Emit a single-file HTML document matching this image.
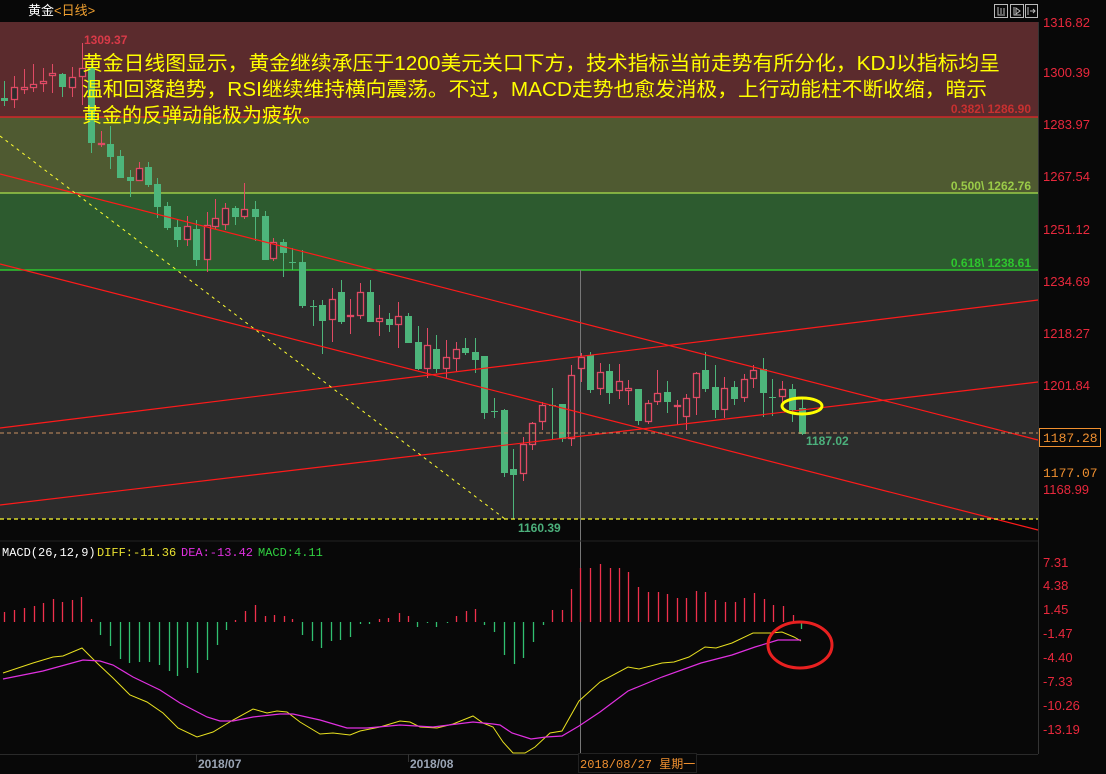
<!DOCTYPE html>
<html><head><meta charset="utf-8"><style>
html,body{margin:0;padding:0;background:#080808;width:1106px;height:774px;overflow:hidden}
svg{display:block}
text{font-family:"Liberation Sans","Noto Sans CJK SC",sans-serif}
.ax{fill:#e8283c;font-size:13px}
.mono{font-family:"Liberation Mono","Noto Sans CJK SC",monospace;font-size:12px}
</style></head><body>
<svg id="s" width="1106" height="774" viewBox="0 0 1106 774" xmlns="http://www.w3.org/2000/svg">
<rect width="1106" height="774" fill="#080808"/>
<rect x="0" y="0" width="1106" height="21" fill="#080808"/>
<text x="28" y="15" fill="#ffffff" font-size="13">黄金</text>
<text x="54" y="15" fill="#f0a030" font-size="13">&lt;日线&gt;</text>
<g fill="none" stroke="#bbb" stroke-width="1">
<rect x="994.5" y="4.5" width="13" height="13"/><rect x="1010.5" y="4.5" width="13" height="13"/><rect x="1025.5" y="4.5" width="12" height="13"/>
<path d="M998 7v8h7M1001 8v6M1004 8v6M1014 7v8h7M1016 8l4 3-4 3zM1028 7v8M1030 11h5M1033 9l2 2-2 2"/>
</g>
<rect x="0" y="22" width="1038" height="497" fill="#2c2c2c"/>
<rect x="0" y="22" width="1038" height="95" fill="#5b2b2d"/>
<rect x="0" y="117" width="1038" height="76" fill="#4f5a31"/>
<rect x="0" y="193" width="1038" height="77" fill="#2d5b2f"/>
<line x1="0" y1="117" x2="1038" y2="117" stroke="#d02828" stroke-width="1.5"/>
<line x1="0" y1="193" x2="1038" y2="193" stroke="#9acb48" stroke-width="1.5"/>
<line x1="0" y1="270" x2="1038" y2="270" stroke="#2ec52e" stroke-width="1.5"/>
<text x="1031" y="113" fill="#c83030" font-size="12" text-anchor="end" font-weight="bold">0.382\ 1286.90</text>
<text x="1031" y="190" fill="#9acb48" font-size="12" text-anchor="end" font-weight="bold">0.500\ 1262.76</text>
<text x="1031" y="267" fill="#2ec52e" font-size="12" text-anchor="end" font-weight="bold">0.618\ 1238.61</text>
<line x1="580.5" y1="270" x2="580.5" y2="758" stroke="#777" stroke-width="1"/>
<g id="candles"></g>
<g stroke="#ff1a1a" stroke-width="1.2" fill="none">
<line x1="0" y1="174" x2="1038" y2="440"/>
<line x1="0" y1="264" x2="1038" y2="530"/>
<line x1="0" y1="428" x2="1038" y2="300"/>
<line x1="0" y1="505" x2="1038" y2="382"/>
</g>
<line x1="0" y1="136" x2="505" y2="519" stroke="#ffff30" stroke-width="1" stroke-dasharray="3,4"/>
<line x1="0" y1="519" x2="1038" y2="519" stroke="#ffff30" stroke-width="1.2" stroke-dasharray="4,3"/>
<line x1="0" y1="433" x2="1038" y2="433" stroke="#c89060" stroke-width="1" stroke-dasharray="4,3"/>
<ellipse cx="802" cy="406" rx="20" ry="8" fill="none" stroke="#ffff00" stroke-width="3"/>
<text x="84" y="44" fill="#d83a48" font-size="12" font-weight="bold">1309.37</text>
<text x="806" y="445" fill="#4cb07c" font-size="12" font-weight="bold">1187.02</text>
<text x="518" y="532" fill="#4cb07c" font-size="12" font-weight="bold">1160.39</text>
<g fill="#ffff00" font-size="20">
<text x="82" y="70" textLength="918" lengthAdjust="spacingAndGlyphs">黄金日线图显示，黄金继续承压于1200美元关口下方，技术指标当前走势有所分化，KDJ以指标均呈</text>
<text x="82" y="96" textLength="905" lengthAdjust="spacingAndGlyphs">温和回落趋势，RSI继续维持横向震荡。不过，MACD走势也愈发消极，上行动能柱不断收缩，暗示</text>
<text x="82" y="122" textLength="240" lengthAdjust="spacingAndGlyphs">黄金的反弹动能极为疲软。</text>
</g>
<rect x="1038" y="22" width="68" height="752" fill="#080808"/>
<line x1="1038.5" y1="22" x2="1038.5" y2="754" stroke="#333"/>
<g class="ax">
<text x="1043" y="27">1316.82</text><text x="1043" y="77">1300.39</text><text x="1043" y="129">1283.97</text>
<text x="1043" y="181">1267.54</text><text x="1043" y="234">1251.12</text><text x="1043" y="286">1234.69</text>
<text x="1043" y="338">1218.27</text><text x="1043" y="390">1201.84</text><text x="1043" y="494">1168.99</text>
</g>
<rect x="1039.5" y="428.5" width="61" height="18" fill="#080808" stroke="#f09030"/>
<text x="1043" y="442" fill="#f09030" class="mono" style="font-size:13px">1187.28</text>
<text x="1043" y="477" fill="#f09030" class="mono" style="font-size:13px">1177.07</text>
<line x1="0" y1="541" x2="1038" y2="541" stroke="#222"/>
<text x="2" y="556" fill="#fff" class="mono">MACD(26,12,9)</text>
<text x="97" y="556" fill="#e8e030" class="mono">DIFF:-11.36</text>
<text x="181" y="556" fill="#e030e0" class="mono">DEA:-13.42</text>
<text x="258" y="556" fill="#30d040" class="mono">MACD:4.11</text>
<g class="ax">
<text x="1043" y="567">7.31</text><text x="1043" y="590">4.38</text><text x="1043" y="614">1.45</text>
<text x="1043" y="638">-1.47</text><text x="1043" y="662">-4.40</text><text x="1043" y="686">-7.33</text>
<text x="1043" y="710">-10.26</text><text x="1043" y="734">-13.19</text>
</g>
<g id="hist"></g>
<polyline fill="none" stroke="#e8e020" stroke-width="1" points="3,673 33,663 53,657 63,656 82,648 97,663 113,678 130,695 147,702 163,713 178,728 197,737 213,732 233,720 253,709 267,713 277,711 287,712 300,722 320,734 333,733 350,735 360,731 380,727 400,721 410,722 420,727 437,728 453,724 473,716 483,723 493,727 503,742 513,753 525,753 535,747 550,733 562,731 579,701 600,682 628,667 639,669 662,663 674,662 689,657 705,647 716,648 732,643 753,633 771,633 782,632 794,637 801,641"/>
<polyline fill="none" stroke="#e030e0" stroke-width="1.2" points="3,679 43,671 83,660 100,661 113,665 133,677 160,690 180,703 207,717 220,721 233,721 253,717 280,714 293,714 320,720 347,728 367,728 400,725 433,727 473,722 493,724 500,725 512,733 531,739 546,737 562,736 579,726 600,712 628,691 662,677 701,663 732,655 755,647 778,640 801,640"/>
<ellipse cx="800" cy="645" rx="32" ry="23" fill="none" stroke="#e82020" stroke-width="3"/>
<line x1="0" y1="754.5" x2="1038" y2="754.5" stroke="#2a2a2a"/>
<line x1="196.5" y1="754" x2="196.5" y2="762" stroke="#333"/>
<line x1="408.5" y1="754" x2="408.5" y2="762" stroke="#333"/>
<text x="198" y="768" fill="#9aa4b4" font-size="12" font-weight="bold">2018/07</text>
<text x="410" y="768" fill="#9aa4b4" font-size="12" font-weight="bold">2018/08</text>
<rect x="578.5" y="753.5" width="118" height="19" fill="#080808" stroke="#222"/>
<text x="580" y="768" fill="#f09030" class="mono" style="font-size:12px">2018/08/27 星期一</text>
</svg>
<script>
var C=[[4,98,101,81,106,'g'],[14,87,100,76,108,'r'],[24,87,90,69,94,'r'],[33,84,88,64,92,'r'],[43,81,84,68,92,'r'],[52,73,76,64,93,'r'],[62,74,87,73,97,'g'],[72,77,88,67,97,'r'],[82,68,77,43,105,'r'],
[91,68,143,62,153,'g'],[101,143,145,131,147,'r'],[110,144,157,126,169,'g'],[120,156,178,150,178,'g'],[130,177,181,170,197,'g'],[139,168,181,162,181,'r'],[148,167,185,162,187,'g'],[157,184,207,178,218,'g'],[167,206,228,202,230,'g'],[177,227,240,220,247,'g'],[187,226,240,216,246,'r'],[196,229,260,220,266,'g'],[207,225,260,212,272,'r'],[215,218,227,199,229,'r'],[225,208,225,203,230,'r'],[235,208,217,206,225,'g'],[244,209,217,183,219,'r'],[255,209,217,201,241,'g'],[265,216,260,211,260,'g'],[273,242,259,238,261,'r'],[283,242,253,239,277,'g'],[292,262,263,248,270,'g'],[302,262,306,250,308,'g'],[313,306,307,300,326,'g'],[322,305,321,300,354,'g'],[332,299,320,288,342,'r'],[341,292,322,280,324,'g'],[350,315,316,299,334,'r'],[360,292,316,283,319,'r'],[370,292,322,280,322,'g'],[379,318,322,305,336,'r'],[389,319,325,313,332,'g'],[398,316,325,302,348,'r'],[408,316,343,313,343,'g'],[418,342,369,326,370,'g'],[427,345,369,328,378,'r'],[436,349,369,335,373,'g'],
[446,357,369,340,378,'r'],[456,349,359,342,372,'r'],[465,348,353,338,355,'g'],[475,352,360,338,373,'g'],[484,356,413,356,419,'g'],[494,411,412,398,418,'g'],[504,410,473,409,477,'g'],[513,469,475,449,519,'g'],[523,444,474,437,481,'r'],[532,423,445,422,450,'r'],[542,405,422,402,430,'r'],[552,405,406,388,440,'g'],[562,404,439,404,442,'g'],[571,375,439,365,446,'r'],[581,357,369,353,382,'r'],[590,355,390,352,393,'g'],[600,372,389,363,395,'r'],[609,371,393,364,404,'g'],[619,381,391,364,399,'r'],[628,388,391,380,405,'r'],[638,389,421,389,425,'g'],[648,403,422,400,424,'r'],[657,393,402,370,405,'r'],[667,392,402,381,413,'g'],[677,405,407,400,425,'r'],[686,398,417,394,430,'r'],[696,373,398,372,415,'r'],[705,370,389,352,392,'g'],[715,387,410,365,418,'g'],[724,388,410,377,418,'r'],[734,387,399,381,405,'g'],[744,379,398,374,402,'r'],[753,370,379,365,388,'r'],[763,369,393,358,417,'g'],[772,397,398,379,416,'g'],[782,389,397,381,407,'r'],[792,389,410,384,422,'g'],[802,408,434,398,435,'g']];
var h='';
C.forEach(function(c){var x=c[0],col=c[5]=='g'?'#4db57b':'#e04a64';
h+='<line x1="'+(x+.5)+'" y1="'+c[3]+'" x2="'+(x+.5)+'" y2="'+c[4]+'" stroke="'+col+'" stroke-width="1"/>';
var ht=Math.max(1,c[2]-c[1]);
if(c[5]=='g')h+='<rect x="'+(x-3)+'" y="'+c[1]+'" width="7" height="'+ht+'" fill="'+col+'"/>';
else h+='<rect x="'+(x-2.5)+'" y="'+(c[1]+.5)+'" width="6" height="'+Math.max(1,ht-1)+'" fill="#2c2c2c" stroke="'+col+'" stroke-width="1.3"/>';});
document.getElementById('candles').innerHTML=h;
var Z=622,H=[[4,612],[14,610],[24,608],[34,606],[43,603],[53,599],[62,602],[72,600],[81,597],[91,619],
[100,635],[110,646],[120,659],[129,663],[139,662],[149,662],[159,665],[169,671],[177,676],[187,668],[197,673],[207,660],[217,645],[226,630],
[235,620],[245,611],[255,605],[265,616],[274,615],[284,616],[292,619],[302,635],[312,641],[321,648],[331,641],[340,640],[350,637],[360,624],[369,624],
[379,619],[388,618],[399,613],[408,616],[417,627],[427,623],[436,627],[447,623],[456,616],[466,611],[475,609],[484,625],[494,632],[504,655],[514,664],[523,658],[533,642],[543,625],
[552,610],[562,610],[571,589],[580,568],[590,568],[600,564],[610,568],[619,568],[628,572],[638,587],[648,592],[658,592],[667,594],[677,598],[686,598],[696,591],[705,592],[715,600],[725,602],[735,602],[744,598],[754,593],[764,599],[773,605],[783,606],[793,615],[801,629]];
var g='';H.forEach(function(b){var x=b[0]+.5,y=b[1],col=y<Z?'#f0304c':'#30c070';g+='<line x1="'+x+'" y1="'+Z+'" x2="'+x+'" y2="'+y+'" stroke="'+col+'" stroke-width="1.3"/>';});
document.getElementById('hist').innerHTML=g;
</script>
</body></html>
